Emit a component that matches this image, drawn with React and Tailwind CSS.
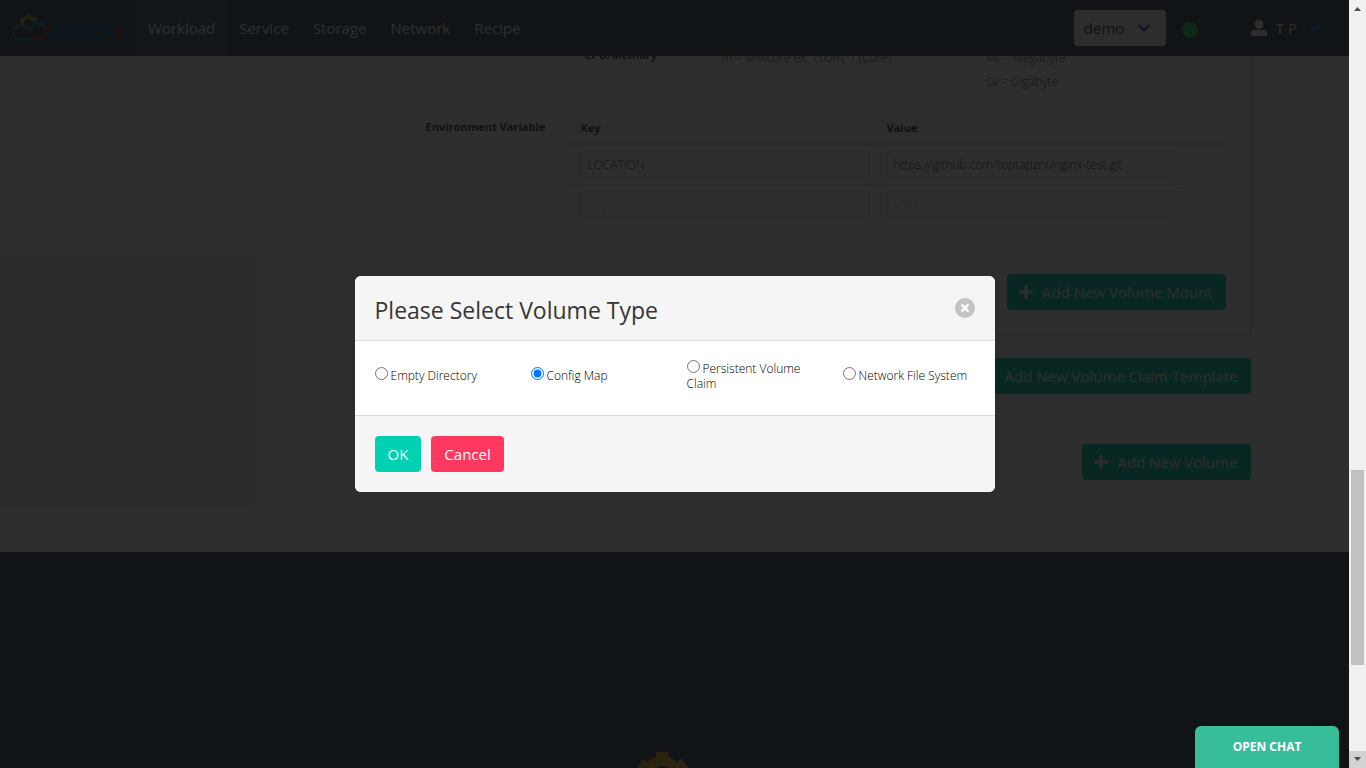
import { FaPlus, FaUser } from "react-icons/fa";
import { LuChevronDown } from "react-icons/lu";

const navItems = ["Workload", "Service", "Storage", "Network", "Recipe"];

const volumeTypes = [
  { id: "empty", label: "Empty Directory" },
  { id: "config", label: "Config Map" },
  { id: "pvc", label: "Persistent Volume Claim" },
  { id: "nfs", label: "Network File System" },
];

const variables = [
  { key: "LOCATION", value: "https://github.com/toptapznt/nginx-test.git" },
  { key: "", value: "" },
];

function Logo() {
  return (
    <a href="#home" aria-label="Home" className="flex h-14 items-center px-3">
      <svg viewBox="0 0 112 28" className="h-7 w-28" fill="none">
        <path
          d="M10.500 12V9.500A6 6 0 0 1 22 7.500"
          stroke="#e0a030"
          strokeWidth="2.600"
        />
        <path
          d="M9.500 7.500l-1-2.500 2-1.500 2 1.200 2-1 .5-2.700h3l.5 2.700 2 1 2-1.200 2 1.500-1 2.500"
          stroke="#e0a030"
          strokeWidth="1.400"
        />
        <path
          d="M19 25.500H8a6.500 6.500 0 0 1-.5-13.500c4-1 7 1 9.500 4.500"
          stroke="#2a8fc8"
          strokeWidth="2.200"
        />
        <path d="M18.500 16a8 8 0 0 1 15-2.500" stroke="#2a8fc8" strokeWidth="2.400" />
        <path d="M18.500 18.500a8 8 0 0 0 15.500 0q1.500-4 6-7-4 .5-7 5" stroke="#c8262c" strokeWidth="2.400" />
        <g stroke="#0a64a8" strokeWidth="2.600">
          <path d="M45 27V12l6.500 8 6.500-8v15" />
          <path d="M73 10.500H62.500v15H73M62.500 18H72" />
          <path d="M88 10.500h-4a7.500 7.500 0 0 0 0 15h4" />
          <path d="M90 27l6.500-16L103 27" />
        </g>
        <path d="M111.500 16H105.500v4.500h5V25.500h-6.500" stroke="#b0262c" strokeWidth="1.800" />
      </svg>
    </a>
  );
}

function Navbar() {
  return (
    <header className="relative flex h-14 shrink-0 items-center bg-[#355065] text-white">
      <Logo />
      <nav className="flex h-full flex-1">
        {navItems.map((item, i) => (
          <a
            key={item}
            href={"#" + item.toLowerCase()}
            className={"flex items-center px-3 " + (i === 0 ? "bg-[#435d70]" : "")}
          >
            {item}
          </a>
        ))}
      </nav>
      <div className="relative mr-4 w-[92px]">
        <select
          aria-label="Namespace"
          className="h-9 w-full appearance-none rounded bg-white pl-2.5 text-[15px] text-[#363636]"
        >
          <option>demo</option>
        </select>
        <LuChevronDown className="pointer-events-none absolute top-2 right-3 size-5 text-[#3273dc]" strokeWidth={3} />
      </div>
      <span className="mt-1 mr-13 size-4 rounded-full bg-[#23d160]" />
      <button className="mr-6 flex items-center">
        <svg viewBox="0 0 18 16" className="mr-2 h-4 w-[18px]" fill="currentColor">
          <circle cx="9" cy="4.500" r="4.500" />
          <path d="M1 16V13.500a3.500 3.500 0 0 1 3.500-3.500h9a3.500 3.500 0 0 1 3.500 3.500V16z" />
        </svg>
        T P
        <LuChevronDown className="ml-2 size-5 text-[#3273dc]" strokeWidth={3} />
      </button>
    </header>
  );
}

function AddButton({ children }) {
  return (
    <button className="flex h-9 items-center gap-2 rounded bg-[#00d1b2] pr-[13px] pl-[11px] text-white">
      <FaPlus className="size-4" />
      {children}
    </button>
  );
}

function Field({ label, value }) {
  return (
    <input
      aria-label={label}
      placeholder={label}
      defaultValue={value}
      className="block h-[27px] w-full rounded-xs border border-[#dbdbdb] px-1.5 text-[12px] text-[#363636] placeholder:text-[#c8c8c8]"
    />
  );
}

function SpecCard() {
  return (
    <section className="border border-t-0 border-[#dbdbdb] px-6 pb-6 text-[12px] leading-6 font-light text-[#363636]">
      <div className="ml-[155px] flex h-[59px] border-b border-[#dbdbdb]">
        <p className="w-[149px] pt-px pl-3 text-[11px] font-bold">CPU/Memory</p>
        <p className="w-[265px] pt-1">m = Millicore ex. 100m, 1 (Core)</p>
        <p className="pt-1">
          Mi = Megabyte
          <br />
          Gi = Gigabyte
        </p>
      </div>
      <div className="flex h-[149px] border-b border-[#f2f2f2]">
        <p className="w-[155px] pt-3.5 pl-2 text-[11px] font-bold">Environment Variable</p>
        <div className="flex-1">
          <table className="w-full table-fixed border-collapse">
            <colgroup>
              <col className="w-[306px]" />
              <col className="w-[304px]" />
              <col />
            </colgroup>
            <thead>
              <tr className="h-[43px] border-b-2 border-[#dbdbdb] text-left text-[11px]">
                <th className="pt-3 pl-2">Key</th>
                <th className="pt-3 pl-2">Value</th>
                <th aria-label="Actions" />
              </tr>
            </thead>
            <tbody>
              {variables.map((v, i) => (
                <tr key={i} className="h-10">
                  <td className={"pr-2.5 pl-2 " + (i === 0 ? "border-b border-[#dbdbdb]" : "")}>
                    <Field label="Key" value={v.key} />
                  </td>
                  <td className={"px-2 " + (i === 0 ? "border-b border-[#dbdbdb]" : "")}>
                    <Field label="Value" value={v.value} />
                  </td>
                  <td />
                </tr>
              ))}
            </tbody>
          </table>
        </div>
      </div>
      <div className="mt-6 flex justify-end text-[15px] font-normal">
        <AddButton>Add New Volume Mount</AddButton>
      </div>
    </section>
  );
}

function VolumeDialog() {
  return (
    <div className="absolute inset-0 flex items-center justify-center bg-[#0a0a0a]/86">
      <div
        role="dialog"
        aria-labelledby="dialog-title"
        className="w-[640px] overflow-hidden rounded-md bg-white text-[#363636]"
      >
        <header className="flex h-[65px] items-center justify-between border-b border-[#dbdbdb] bg-[#f5f5f5] px-5">
          <h1 id="dialog-title" className="pt-1 text-[23px] leading-6">
            Please Select Volume Type
          </h1>
          <button aria-label="Close" className="flex size-5 items-center justify-center rounded-full bg-[#c4c4c4]">
            <svg viewBox="0 0 20 20" className="size-5" stroke="white" strokeWidth="2.400">
              <path d="M6.500 6.500l7 7M13.500 6.500l-7 7" />
            </svg>
          </button>
        </header>
        <fieldset className="grid h-[74px] grid-cols-4 items-center gap-6 px-5 pb-1.5 text-[12px] leading-[15px] font-light text-black">
          {volumeTypes.map((type) => (
            <div key={type.id}>
              <input
                type="radio"
                name="volume-type"
                id={type.id}
                defaultChecked={type.id === "config"}
                className="mr-[3px] size-[13px] accent-[#0075ff]"
              />
              <label htmlFor={type.id}>{type.label}</label>
            </div>
          ))}
        </fieldset>
        <footer className="flex gap-2.5 border-t border-[#dbdbdb] bg-[#f5f5f5] p-5 text-white">
          <button className="h-9 rounded bg-[#00d1b2] px-[13px]">OK</button>
          <button className="h-9 rounded bg-[#ff3860] px-[13px]">Cancel</button>
        </footer>
      </div>
    </div>
  );
}

function ScrollRail() {
  return (
    <div aria-hidden="true" className="flex w-[17px] shrink-0 flex-col items-center bg-[#f1f1f1]">
      <svg viewBox="0 0 17 17" className="size-[17px]" fill="#505050">
        <path d="M5 11h7L8.500 7z" />
      </svg>
      <div className="flex w-full flex-1 flex-col px-0.5">
        <div className="grow-[453]" />
        <div className="grow-[195] bg-[#c1c1c1]" />
        <div className="grow-[86]" />
      </div>
      <svg viewBox="0 0 17 17" className="size-[17px] bg-[#d2d2d2]" fill="#505050">
        <path d="M5 6h7l-3.500 4z" />
      </svg>
    </div>
  );
}

export default function App() {
  return (
    <div className="flex h-screen overflow-hidden font-['Open_Sans','Noto_Sans',sans-serif] text-[15px]">
      <div className="relative flex min-w-0 flex-1 flex-col overflow-hidden bg-white">
        <Navbar />
        <div className="flex min-h-0 flex-1 flex-col overflow-hidden">
          <main className="mx-auto -mt-3.5 flex w-full max-w-[1152px] shrink-0 pb-[72px]">
            <div className="w-[294px] shrink-0" />
            <div className="flex-1">
              <SpecCard />
              <div className="flex justify-end border-b border-[#f5f5f5] pt-[23px] pb-6">
                <AddButton>Add New Volume Claim Template</AddButton>
              </div>
              <div className="mt-[25px] flex justify-end">
                <AddButton>Add New Volume</AddButton>
              </div>
            </div>
          </main>
          <footer className="flex flex-1 items-end justify-center bg-[#355065]">
            <svg viewBox="0 0 52 16" className="mr-6 h-4 w-[52px]" fill="#f9b233">
              <path d="M0 16L6 7l4 3q4-3 9-5V0h13v5q5 2 8 5l4-3 8 9H33q-7-4-14 0z" />
            </svg>
          </footer>
        </div>
        <VolumeDialog />
        <button className="absolute right-2.5 bottom-0 h-[42px] w-36 rounded-t-md bg-[#38bd99] text-[12px] font-bold text-white">
          OPEN CHAT
        </button>
      </div>
      <ScrollRail />
    </div>
  );
}
